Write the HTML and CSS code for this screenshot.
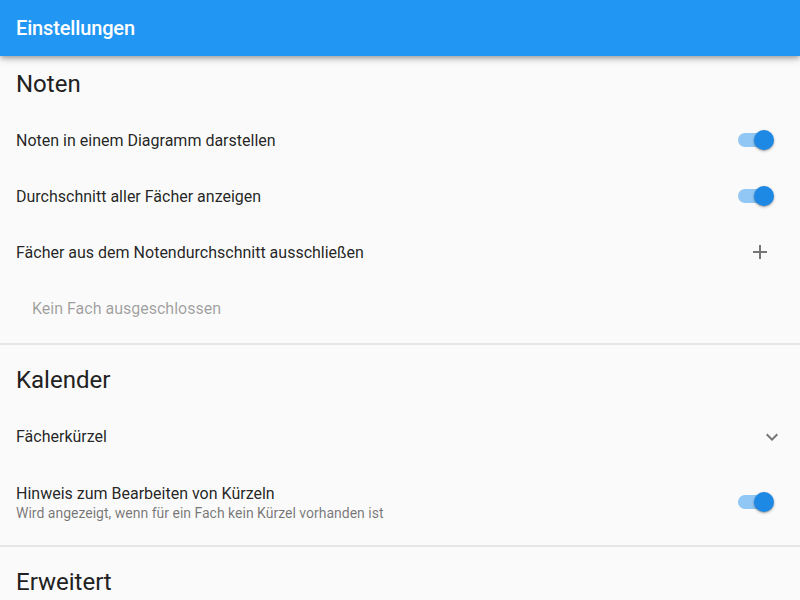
FILE: index.html
```html
<!DOCTYPE html>
<html lang="de">
<head>
<meta charset="utf-8">
<link rel="stylesheet" href="styles.css">
</head>
<body>
<header class="appbar"><h1 class="appbar-title">Einstellungen</h1></header>
<main class="content">
  <section class="section">
    <h2 class="section-title">Noten</h2>
    <div class="row">
      <span class="row-title">Noten in einem Diagramm darstellen</span>
      <span class="switch"><span class="track"></span><span class="thumb"></span></span>
    </div>
    <div class="row">
      <span class="row-title">Durchschnitt aller Fächer anzeigen</span>
      <span class="switch"><span class="track"></span><span class="thumb"></span></span>
    </div>
    <div class="row">
      <span class="row-title">Fächer aus dem Notendurchschnitt ausschließen</span>
      <svg class="icon icon-add" viewBox="0 0 24 24" width="24" height="24"><path d="M19 13h-6v6h-2v-6H5v-2h6V5h2v6h6v2z"/></svg>
    </div>
    <div class="row row-indent">
      <span class="row-hint">Kein Fach ausgeschlossen</span>
    </div>
  </section>
  <div class="divider"></div>
  <section class="section">
    <h2 class="section-title">Kalender</h2>
    <div class="row">
      <span class="row-title">Fächerkürzel</span>
      <svg class="icon icon-expand" viewBox="0 0 24 24" width="24" height="24"><path d="M16.59 8.59L12 13.17 7.41 8.59 6 10l6 6 6-6z"/></svg>
    </div>
    <div class="row row-two">
      <div class="row-text">
        <span class="row-title">Hinweis zum Bearbeiten von Kürzeln</span>
        <span class="row-sub">Wird angezeigt, wenn für ein Fach kein Kürzel vorhanden ist</span>
      </div>
      <span class="switch"><span class="track"></span><span class="thumb"></span></span>
    </div>
  </section>
  <div class="divider"></div>
  <section class="section">
    <h2 class="section-title">Erweitert</h2>
  </section>
</main>
</body>
</html>
```
FILE: styles.css
```css
* { box-sizing: border-box; }
html, body { margin: 0; padding: 0; }
body {
  background: #fafafa;
  font-family: Roboto, "Liberation Sans", sans-serif;
  width: 800px;
  height: 600px;
  overflow: hidden;
}
.appbar {
  height: 56px;
  background: #2196f3;
  display: flex;
  align-items: center;
  padding: 0 16px;
  box-shadow: 0 2px 4px -1px rgba(0,0,0,0.2), 0 4px 5px 0 rgba(0,0,0,0.14), 0 1px 10px 0 rgba(0,0,0,0.12);
  position: relative;
  z-index: 1;
}
.appbar-title {
  margin: 0;
  color: #fff;
  font-size: 20px;
  font-weight: 500;
  letter-spacing: -0.15px;
}
.content { display: flex; flex-direction: column; }
.section { display: flex; flex-direction: column; }
.section-title {
  margin: 0;
  height: 56px;
  display: flex;
  align-items: center;
  padding: 0 16px;
  font-size: 24px;
  font-weight: 400;
  color: #212121;
}
.row {
  height: 56px;
  display: flex;
  align-items: center;
  justify-content: space-between;
  padding: 0 16px;
}
.row-two { height: 74px; padding-top: 2px; }
.row-indent { padding-left: 32px; }
.row-title {
  font-size: 16px;
  color: rgba(0,0,0,0.87);
}
.row-text { display: flex; flex-direction: column; gap: 2px; }
.row-sub {
  font-size: 14px;
  color: rgba(0,0,0,0.54);
}
.row-hint {
  font-size: 16px;
  color: rgba(0,0,0,0.38);
}
.divider {
  height: 16px;
  display: flex;
  align-items: center;
}
.divider::after {
  content: "";
  display: block;
  width: 100%;
  height: 2px;
  background: #e6e6e6;
}
.icon { fill: #757575; flex: none; }
.icon-add { margin-right: 12px; }
.icon-expand { margin-right: 0; margin-top: 2px; }
.switch {
  position: relative;
  width: 36px;
  height: 20px;
  margin-right: 10px;
  flex: none;
}
.track {
  position: absolute;
  left: 0;
  top: 3px;
  width: 34px;
  height: 14px;
  border-radius: 7px;
  background: #90c7f5;
}
.thumb {
  position: absolute;
  right: 0;
  top: 0;
  width: 20px;
  height: 20px;
  border-radius: 50%;
  background: #1e88e5;
  box-shadow: 0 1px 3px rgba(0,0,0,0.3), 0 1px 1px rgba(0,0,0,0.14);
}
```
